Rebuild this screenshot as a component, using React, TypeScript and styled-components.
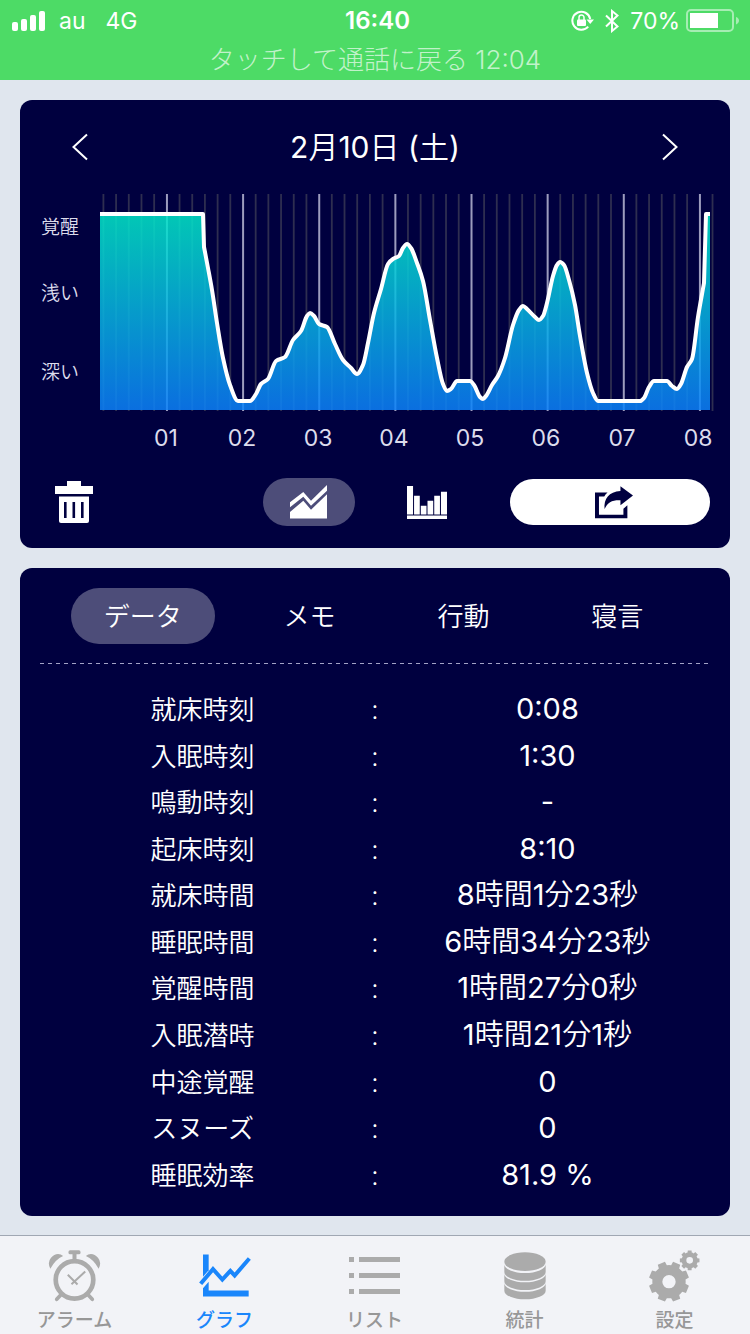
import React, { useState } from "react";
import styled, { createGlobalStyle } from "styled-components";

const NAVY = "#00003f";

const GlobalStyle = createGlobalStyle`
  *, *::before, *::after { box-sizing: border-box; }
  body {
    margin: 0;
    background: #e0e6ee;
    font-family: Inter, "Noto Sans CJK JP", sans-serif;
    font-weight: 350;
    color: #fff;
  }
  button { font: inherit; color: inherit; background: none; border: 0; padding: 0; cursor: pointer; }
  svg { display: block; }
`;

const Screen = styled.div`
  min-height: 100vh;
  display: flex;
  flex-direction: column;
`;

/* ---------- status bar ---------- */

const StatusBar = styled.header`
  background: #4ddb66;
  height: 80px;
`;

const StatusRow = styled.div`
  display: grid;
  grid-template-columns: 1fr auto 1fr;
  align-items: center;
  height: 41px;
  padding: 0 11px 0 12px;
  font-size: 23px;
  font-weight: 400;
`;

const StatusGroup = styled.div<{ $end?: boolean; $gap: number }>`
  display: flex;
  align-items: center;
  gap: ${(p) => p.$gap}px;
  justify-content: ${(p) => (p.$end ? "flex-end" : "flex-start")};
`;

const Carrier = styled.span`
  margin-right: 6px;
`;

const Clock = styled.time`
  padding-left: 4px;
  font-size: 24px;
  font-weight: 600;
`;

const ReturnToCall = styled.button`
  display: block;
  width: 100%;
  height: 38px;
  font-size: 26px;
  font-weight: 300;
  line-height: 38px;
  color: rgba(255, 255, 255, 0.68);
`;

/* ---------- cards ---------- */

const Main = styled.main`
  flex: 1;
  display: flex;
  flex-direction: column;
  gap: 20px;
  padding: 20px 20px 19px;
`;

const Card = styled.section`
  background: ${NAVY};
  border-radius: 12px;
`;

const DateRow = styled.div`
  display: flex;
  align-items: center;
  justify-content: space-between;
  height: 94px;
  padding: 0 40px;
`;

const DateTitle = styled.h1`
  margin: 0;
  font-size: 30px;
  font-weight: 350;
  line-height: 40px;
`;

const Digits = styled.span`
  font-weight: 400;
`;

const ArrowButton = styled.button`
  display: grid;
  place-items: center;
  width: 40px;
  height: 48px;
`;

const Chart = styled.svg`
  width: 100%;
  height: auto;
`;

const Toolbar = styled.div`
  display: flex;
  align-items: center;
  padding: 24px 20px 22px 30px;
`;

const DeleteButton = styled.button`
  display: grid;
  place-items: center;
  width: 48px;
  height: 48px;
`;

const ModeGroup = styled.div`
  display: flex;
  gap: 26px;
  margin: 0 37px 0 auto;
`;

const ModeButton = styled.button<{ $active: boolean }>`
  display: grid;
  place-items: center;
  width: 92px;
  height: 48px;
  border-radius: 24px;
  background: ${(p) => (p.$active ? "#4d4d79" : "transparent")};
`;

const ShareButton = styled.button`
  display: grid;
  place-items: center;
  width: 200px;
  height: 46px;
  padding-left: 8px;
  border-radius: 23px;
  background: #fff;
`;

const TabRow = styled.div`
  display: flex;
  justify-content: space-evenly;
  padding: 20px 18px 19px 15px;
`;

const Tab = styled.button<{ $active: boolean }>`
  height: 56px;
  padding: 2px 33px 0;
  border-radius: 28px;
  font-size: 26px;
  line-height: 54px;
  background: ${(p) => (p.$active ? "#4d4d79" : "transparent")};
`;

const Divider = styled.hr`
  height: 1px;
  margin: 0 20px;
  border: 0;
  background: repeating-linear-gradient(90deg, #a3a3c6 0 4px, transparent 4px 8px);
`;

const TableWrap = styled.div`
  padding: 22px 56px 18px;
`;

const DataTable = styled.table`
  width: 100%;
  height: 512px;
  border-collapse: collapse;
  table-layout: fixed;
  text-align: center;
  white-space: nowrap;
`;

const LabelCell = styled.th`
  width: 42%;
  padding: 2px 0 0 2px;
  font-size: 26px;
  font-weight: 350;
  line-height: 40px;
`;

const ColonCell = styled.td`
  width: 16%;
  padding: 2px 0 0;
  font-size: 26px;
  line-height: 40px;
`;

const ValueCell = styled.td`
  width: 42%;
  padding: 0 2px 0 0;
  font-size: 29px;
  line-height: 40px;
`;

/* ---------- bottom navigation ---------- */

const BottomNav = styled.nav`
  display: grid;
  grid-template-columns: repeat(5, 1fr);
  height: 99px;
  background: #f2f3f7;
  border-top: 1px solid #a0a7b3;
`;

const NavLink = styled.a<{ $active?: boolean }>`
  display: flex;
  flex-direction: column;
  align-items: center;
  padding-right: 1px;
  color: ${(p) => (p.$active ? "#1a86fb" : "#979797")};
  font-size: 19px;
  font-weight: 500;
  line-height: 26px;
  text-decoration: none;
`;

const NavIcon = styled.span<{ $active?: boolean }>`
  display: grid;
  place-items: center;
  height: 72px;
  padding-top: 7px;
  color: ${(p) => (p.$active ? "#1a86fb" : "#ababab")};
`;

/* ---------- chart data ---------- */

type Point = [number, number];

const CURVE: Point[] = [
  [204, 247], [208, 268], [212, 290], [217, 323], [223, 358], [230, 385], [238, 401], [250, 401],
  [256, 394], [261, 384], [268, 379], [276, 361], [285, 357], [293, 340], [301, 331],
  [307, 316], [310, 313], [314, 316], [319, 324], [327, 327], [335, 344], [343, 360],
  [351, 368], [357, 374], [363, 365], [368, 343], [374, 313], [381, 289], [388, 264], [393, 259],
  [399, 256], [403, 248], [407, 244], [411, 248], [417, 263], [423, 281], [430, 320],
  [437, 358], [443, 384], [447, 391], [451, 389], [457, 381], [470, 381], [474, 385],
  [480, 397], [483, 399], [486, 396], [492, 385], [498, 376], [505, 358], [513, 325],
  [519, 310], [523, 306], [527, 309], [535, 317], [539, 320], [543, 316], [547, 303],
  [553, 276], [557, 265], [560, 262], [564, 265], [569, 280], [575, 305], [580, 336],
  [587, 373], [593, 393], [598, 401], [640, 401], [644, 398], [649, 387], [654, 381],
  [667, 381], [672, 386], [677, 389], [681, 384], [687, 367], [692, 359], [698, 317],
  [704, 283],
];

/* Monotone cubic interpolation, so that plateaus stay flat. */
function smoothPath(points: Point[]): string {
  const last = points.length - 1;
  const slope = (i: number) =>
    (points[i + 1][1] - points[i][1]) / (points[i + 1][0] - points[i][0]);
  const tangents = points.map((_, i) => {
    if (i === 0) return slope(0);
    if (i === last) return slope(last - 1);
    const a = slope(i - 1);
    const b = slope(i);
    return a * b <= 0 ? 0 : (2 * a * b) / (a + b);
  });
  let path = "";
  for (let i = 0; i < last; i++) {
    const [x0, y0] = points[i];
    const [x1, y1] = points[i + 1];
    const h = (x1 - x0) / 3;
    path += `C${x0 + h} ${y0 + tangents[i] * h} ${x1 - h} ${y1 - tangents[i + 1] * h} ${x1} ${y1}`;
  }
  return path;
}

const LINE = `M100 214H203L204 247${smoothPath(CURVE)}L706 214H710`;
const HOURS = ["01", "02", "03", "04", "05", "06", "07", "08"];
const GRID = Array.from({ length: 49 }, (_, i) => ({
  x: 103.5 + i * 12.69,
  major: i % 6 === 5,
}));

const SleepChart = () => (
  <Chart viewBox="20 194 710 260" role="img" aria-label="睡眠グラフ">
    <defs>
      <linearGradient id="depth" gradientUnits="userSpaceOnUse" x1="0" y1="214" x2="0" y2="410">
        <stop offset="0" stopColor="#02e8c9" />
        <stop offset="1" stopColor="#0c81fa" />
      </linearGradient>
    </defs>
    {GRID.map(({ x, major }) => (
      <rect
        key={x}
        x={x - 1}
        y="194"
        width={major ? 2 : 1.8}
        height="217"
        fill={major ? "#9c9cbd" : "#2e2e50"}
      />
    ))}
    <path d={`${LINE}V410H100Z`} fill="url(#depth)" fillOpacity="0.86" />
    <path d={LINE} fill="none" stroke="#fff" strokeWidth="4" strokeLinejoin="round" />
    <g fill="#dcdcec" fontSize="19">
      <text x="41" y="234">覚醒</text>
      <text x="41" y="300">浅い</text>
      <text x="41" y="379">深い</text>
    </g>
    <g fill="#dcdcec" fontSize="23" fontWeight="400" textAnchor="middle">
      {HOURS.map((hour, i) => (
        <text key={hour} x={166 + i * 76} y="446">{hour}</text>
      ))}
    </g>
  </Chart>
);

/* ---------- icons ---------- */

const SignalIcon = () => (
  <svg width="33" height="20" viewBox="0 0 33 20" fill="#fff">
    <rect x="0" y="11" width="6" height="9" rx="2" />
    <rect x="9" y="8" width="6" height="12" rx="2" />
    <rect x="18" y="4" width="6" height="16" rx="2" />
    <rect x="27" y="0" width="6" height="20" rx="2" />
  </svg>
);

const RotationLockIcon = () => (
  <svg width="23" height="22" viewBox="0 0 23 22" fill="none" stroke="#fff">
    <path d="M17.2 16.600A9 9 0 1 1 19.200 9" strokeWidth="2" />
    <path d="M15.500 9.500H23L19.200 14Z" fill="#fff" stroke="none" />
    <rect x="6" y="9.5" width="9" height="6.5" rx="1" fill="#fff" stroke="none" />
    <path d="M8 10V7.600a2.500 2.500 0 0 1 5 0V10" strokeWidth="1.5" />
  </svg>
);

const BluetoothIcon = () => (
  <svg width="14" height="24" viewBox="0 0 14 24" fill="none" stroke="#fff" strokeWidth="2">
    <path d="M1 6.500 12.500 17.500 7 22V2L12.500 6.500 1 17.500" />
  </svg>
);

const BatteryIcon = () => (
  <svg width="53" height="24" viewBox="0 0 53 24">
    <rect x="1" y="1" width="46" height="21" rx="4" fill="none" stroke="#fff" strokeOpacity="0.5" strokeWidth="2" />
    <rect x="4" y="4" width="28" height="15" fill="#fff" />
    <path d="M50 8c4 1 4 6 0 7.500z" fill="#fff" fillOpacity="0.5" />
  </svg>
);

const ChevronIcon = ({ right }: { right?: boolean }) => (
  <svg width="16" height="28" viewBox="0 0 16 28" fill="none" stroke="#fff" strokeWidth="2">
    <path d={right ? "M1 1.500 14.500 14 1 26.500" : "M15 1.500 1.500 14 15 26.500"} />
  </svg>
);

const TrashIcon = () => (
  <svg width="38" height="42" viewBox="0 0 38 42">
    <path d="M12 0H26V5H38V13H0V5H12Z" fill="#fff" />
    <path d="M4 15.500H34V40a2 2 0 0 1-2 2H6a2 2 0 0 1-2-2Z" fill="#fff" />
    <path d="M9 21h2.600v16H9zM17.500 21h2.600v16h-2.600zM26 21h2.600v16H26z" fill={NAVY} />
  </svg>
);

const AreaIcon = () => (
  <svg width="38" height="34" viewBox="0 0 38 34" fill="#fff">
    <path d="M0 17.300 13.300 7 21 15.700 37 0V5.700L21 20.700 13.300 11.700 0 22.300Z" />
    <path d="M0 27 13.300 15.700 21 24.700 37 9.300V33.500H0Z" />
  </svg>
);

const BarsIcon = () => (
  <svg width="40" height="33" viewBox="0 0 119 98" fill="#fff">
    <path d="M0 0h18v85H0zM21 29h17v56H21zM41 59h17v26H41zM61 44h17v41H61zM81 29h17v56H81zM101 17h18v68h-18zM0 88h119v10H0z" />
  </svg>
);

const ShareIcon = () => (
  <svg width="38" height="33" viewBox="0 0 115 98" fill={NAVY}>
    <path d="M77 0 115 28 77 57V42C52 41 38 48 29 69 26 38 42 16 77 14Z" />
    <path d="M38 19H0V97H98V57L86 68V86H12V31H28Q32 24 38 19Z" />
  </svg>
);

const AlarmIcon = () => (
  <svg width="53" height="52" viewBox="143 85 158 155" fill="currentColor">
    <circle cx="222" cy="174" r="56" fill="none" stroke="currentColor" strokeWidth="14" />
    <rect x="204" y="86" width="36" height="12" rx="5" />
    <rect x="216" y="92" width="12" height="24" />
    <path d="M150 141Q140 122 152 108C162 95 178 93 188 103Q165 113 150 141Z" />
    <path d="M294 141Q304 122 292 108C282 95 266 93 256 103Q279 113 294 141Z" />
    <path
      d="M183 217 169 232M261 217 275 232"
      fill="none"
      stroke="currentColor"
      strokeWidth="11"
      strokeLinecap="round"
    />
    <path d="M202 159 231 188M254 149 213 187" fill="none" stroke="currentColor" strokeWidth="6" />
  </svg>
);

const GraphIcon = () => (
  <svg width="52" height="43" viewBox="595 104 156 128" fill="currentColor">
    <path d="M607 105H624V152L607 172Z" />
    <path d="M607 206 624 187V213H744V231H607Z" />
    <path d="M600 193 637 149 665 180 689 154 702 168 746 117" fill="none" stroke="currentColor" strokeWidth="12" />
  </svg>
);

const ListIcon = () => (
  <svg width="51" height="37" viewBox="0 0 51 37" fill="currentColor">
    <path d="M0 0h5v5H0zM10 0h41v5H10zM0 16h5v5H0zM10 16h41v5H10zM0 32h5v5H0zM10 32h41v5H10z" />
  </svg>
);

const DatabaseIcon = () => (
  <svg width="42" height="48" viewBox="387 94 126 144" fill="currentColor">
    <ellipse cx="450" cy="123" rx="62" ry="28" />
    {[131, 159, 187].map((y) => (
      <path key={y} d={`M388 ${y}A62 26 0 0 0 512 ${y}V${y + 23}A62 26 0 0 1 388 ${y + 23}Z`} />
    ))}
  </svg>
);

function gearPath(cx: number, cy: number, outer: number, inner: number, hole: number, turn: number) {
  const at = (r: number, deg: number) => {
    const a = ((deg + turn) * Math.PI) / 180;
    return `${(cx + r * Math.sin(a)).toFixed(1)} ${(cy - r * Math.cos(a)).toFixed(1)}`;
  };
  let d = "";
  for (let i = 0; i < 8; i++) {
    const c = i * 45;
    d += `${i ? "L" : "M"}${at(inner, c - 15)}L${at(outer, c - 11)}L${at(outer, c + 11)}L${at(inner, c + 15)}`;
    d += `A${inner} ${inner} 0 0 1 ${at(inner, c + 30)}`;
  }
  return `${d}ZM${cx - hole} ${cy}a${hole} ${hole} 0 1 0 ${hole * 2} 0a${hole} ${hole} 0 1 0 ${-hole * 2} 0Z`;
}

const GearsIcon = () => (
  <svg width="51" height="52" viewBox="823 86 153 156" fill="currentColor" fillRule="evenodd">
    <path d={gearPath(883, 181, 61, 50, 20, 22.5)} />
    <path d={gearPath(945, 117, 30, 24, 10, 0)} />
  </svg>
);

/* ---------- page ---------- */

const TABS = ["データ", "メモ", "行動", "寝言"];

const ROWS = [
  ["就床時刻", "0:08"],
  ["入眠時刻", "1:30"],
  ["鳴動時刻", "-"],
  ["起床時刻", "8:10"],
  ["就床時間", "8時間1分23秒"],
  ["睡眠時間", "6時間34分23秒"],
  ["覚醒時間", "1時間27分0秒"],
  ["入眠潜時", "1時間21分1秒"],
  ["中途覚醒", "0"],
  ["スヌーズ", "0"],
  ["睡眠効率", "81.9 %"],
];

const NAV = [
  { label: "アラーム", icon: <AlarmIcon /> },
  { label: "グラフ", icon: <GraphIcon />, active: true },
  { label: "リスト", icon: <ListIcon /> },
  { label: "統計", icon: <DatabaseIcon /> },
  { label: "設定", icon: <GearsIcon /> },
];

/* Sets Latin runs a step heavier than the kanji around them. */
const Mixed = ({ text }: { text: string }) => (
  <>
    {text
      .split(/([\x20-\x7e]+)/)
      .filter(Boolean)
      .map((run, i) => (/^[\x20-\x7e]/.test(run) ? <Digits key={i}>{run}</Digits> : run))}
  </>
);

export default function App() {
  const [mode, setMode] = useState("area");
  const [tab, setTab] = useState(TABS[0]);

  return (
    <Screen lang="ja">
      <GlobalStyle />
      <StatusBar>
        <StatusRow>
          <StatusGroup $gap={14}>
            <SignalIcon />
            <Carrier>au</Carrier>
            <span>4G</span>
          </StatusGroup>
          <Clock>16:40</Clock>
          <StatusGroup $end $gap={6}>
            <StatusGroup $gap={11}>
              <RotationLockIcon />
              <BluetoothIcon />
              <span>70%</span>
            </StatusGroup>
            <BatteryIcon />
          </StatusGroup>
        </StatusRow>
        <ReturnToCall type="button">タッチして通話に戻る 12:04</ReturnToCall>
      </StatusBar>

      <Main>
        <Card>
          <DateRow>
            <ArrowButton type="button" aria-label="前の日"><ChevronIcon /></ArrowButton>
            <DateTitle><Mixed text="2月10日 (土)" /></DateTitle>
            <ArrowButton type="button" aria-label="次の日"><ChevronIcon right /></ArrowButton>
          </DateRow>
          <SleepChart />
          <Toolbar>
            <DeleteButton type="button" aria-label="削除"><TrashIcon /></DeleteButton>
            <ModeGroup>
              <ModeButton
                type="button"
                aria-label="折れ線"
                aria-pressed={mode === "area"}
                $active={mode === "area"}
                onClick={() => setMode("area")}
              >
                <AreaIcon />
              </ModeButton>
              <ModeButton
                type="button"
                aria-label="棒グラフ"
                aria-pressed={mode === "bars"}
                $active={mode === "bars"}
                onClick={() => setMode("bars")}
              >
                <BarsIcon />
              </ModeButton>
            </ModeGroup>
            <ShareButton type="button" aria-label="共有"><ShareIcon /></ShareButton>
          </Toolbar>
        </Card>

        <Card>
          <TabRow role="tablist">
            {TABS.map((name) => (
              <Tab
                key={name}
                type="button"
                role="tab"
                aria-selected={tab === name}
                $active={tab === name}
                onClick={() => setTab(name)}
              >
                {name}
              </Tab>
            ))}
          </TabRow>
          <Divider />
          <TableWrap>
            <DataTable>
              <tbody>
                {ROWS.map(([label, value]) => (
                  <tr key={label}>
                    <LabelCell scope="row">{label}</LabelCell>
                    <ColonCell>:</ColonCell>
                    <ValueCell><Mixed text={value} /></ValueCell>
                  </tr>
                ))}
              </tbody>
            </DataTable>
          </TableWrap>
        </Card>
      </Main>

      <BottomNav>
        {NAV.map(({ label, icon, active }) => (
          <NavLink key={label} href="#" $active={active} aria-current={active ? "page" : undefined}>
            <NavIcon $active={active}>{icon}</NavIcon>
            {label}
          </NavLink>
        ))}
      </BottomNav>
    </Screen>
  );
}
